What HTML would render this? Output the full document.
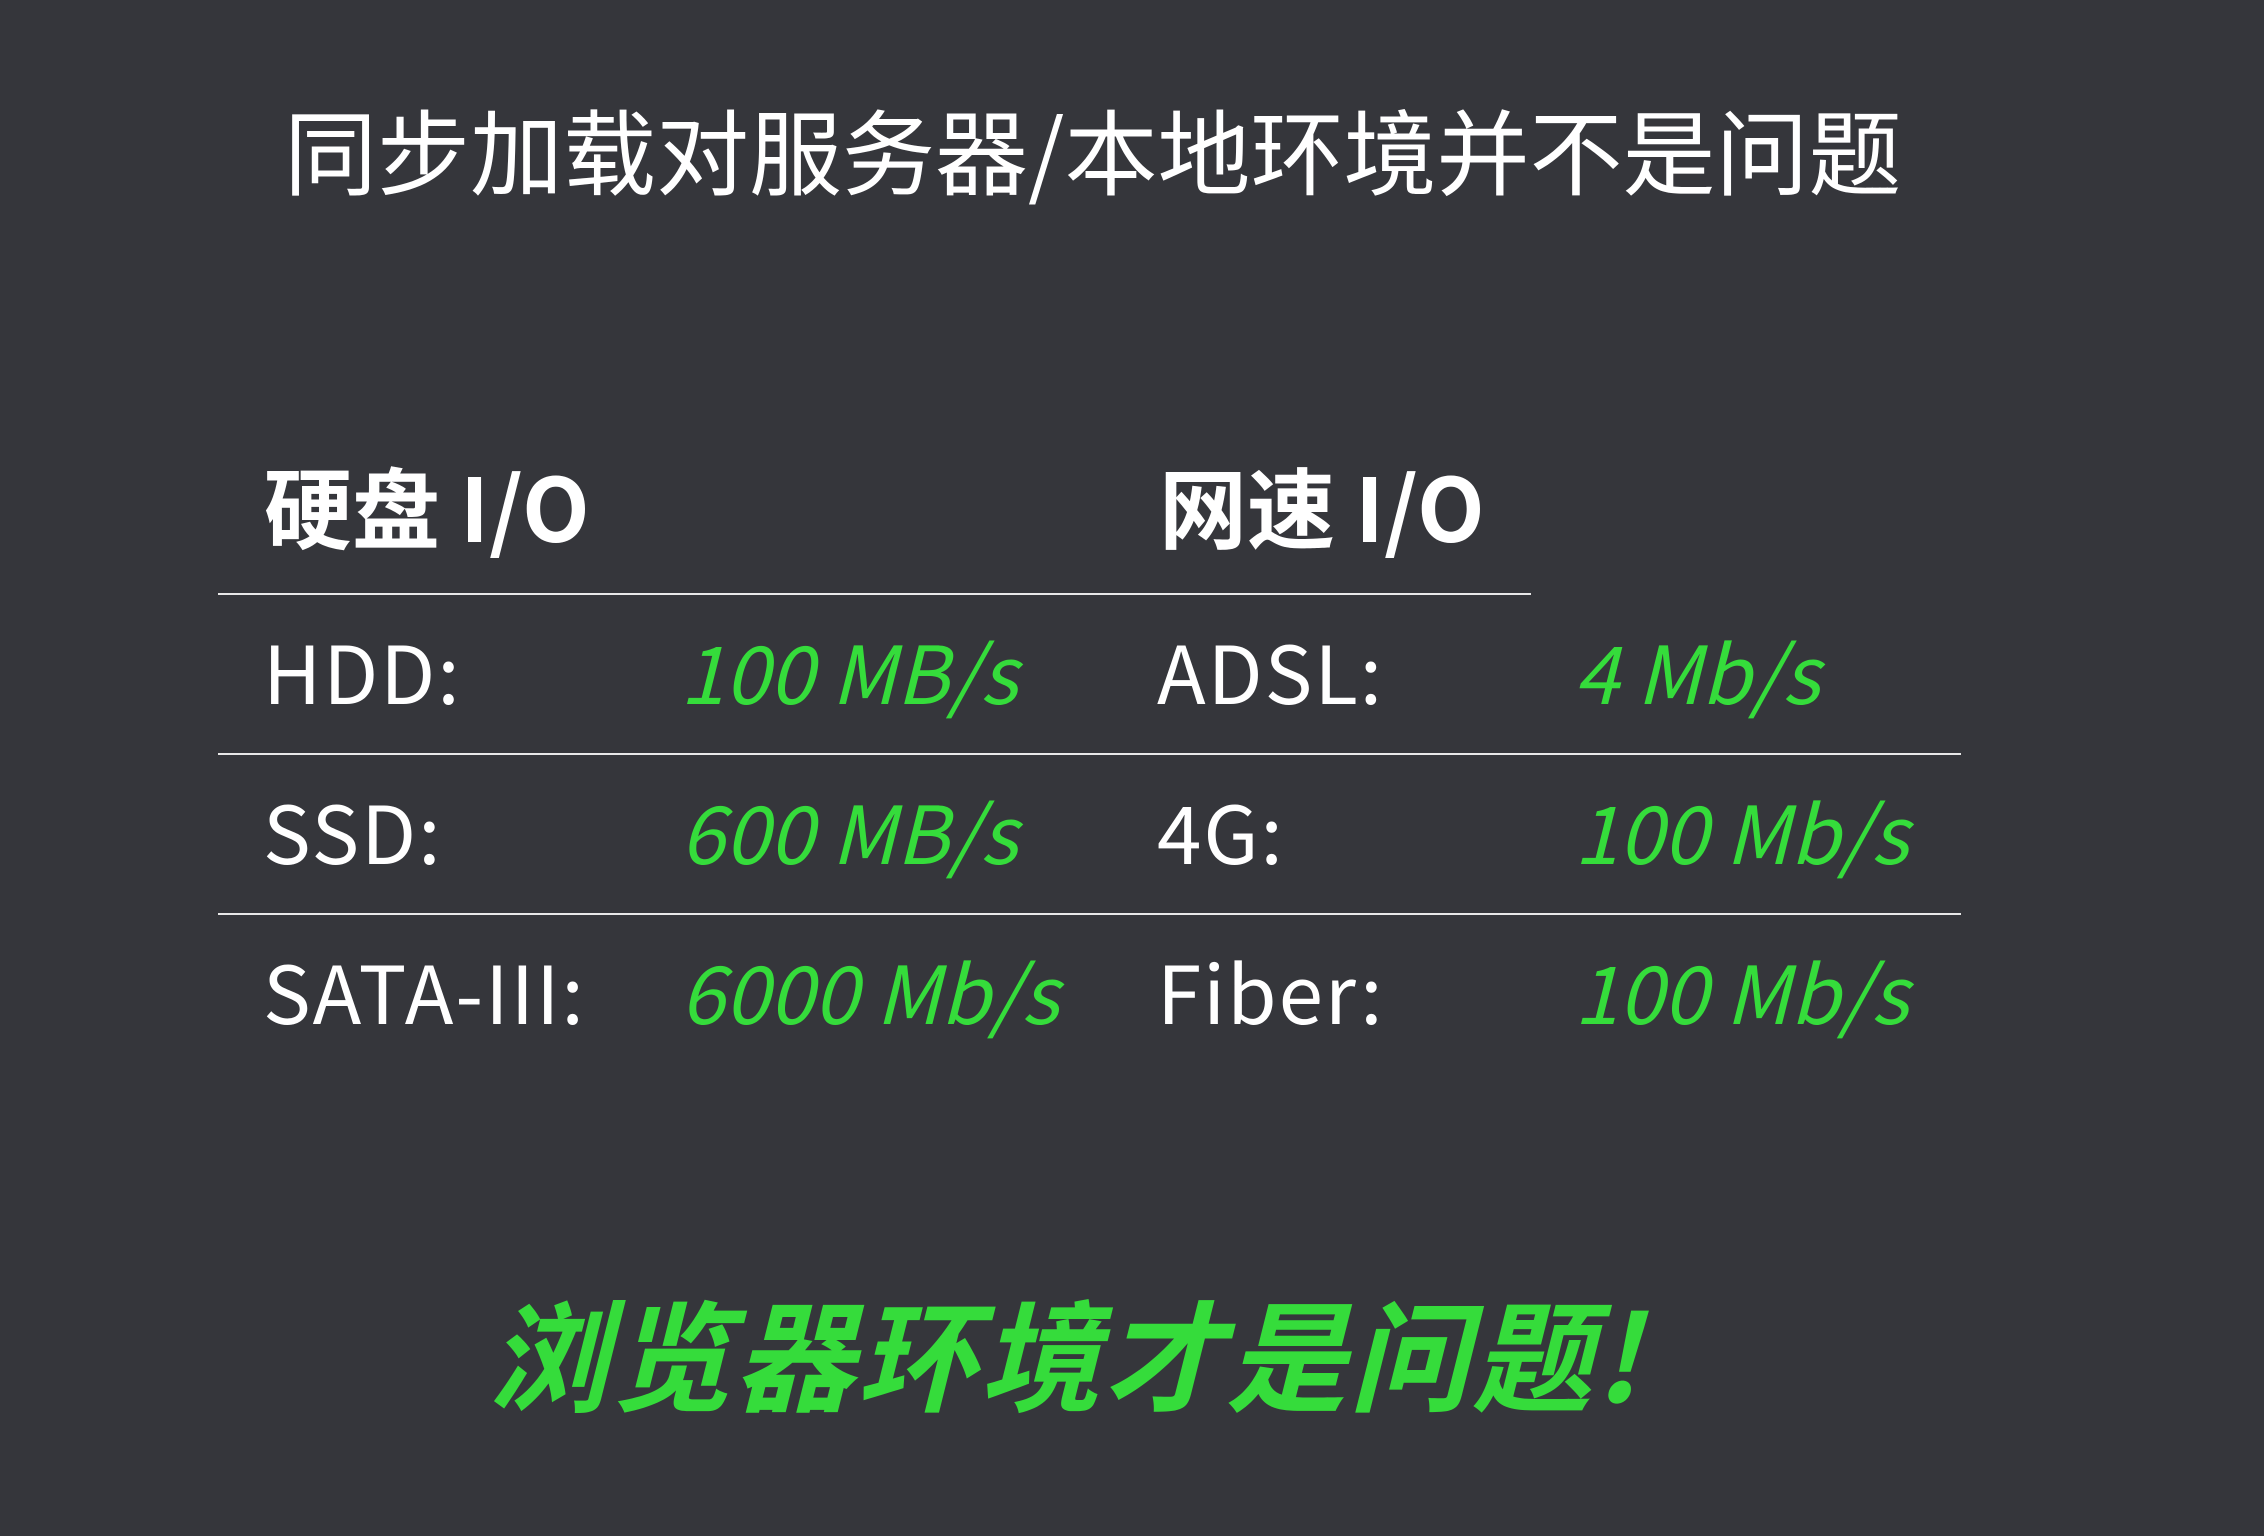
<!DOCTYPE html>
<html><head><meta charset="utf-8"><style>
html,body{margin:0;padding:0;}
body{width:2264px;height:1536px;background:#35363b;position:relative;overflow:hidden;font-family:"Noto Sans CJK SC","Liberation Sans",sans-serif;color:#fff;}
.t{position:absolute;white-space:nowrap;}
.g{color:#35dc3b;font-style:italic;}
.w{letter-spacing:2px;}
.l{position:absolute;height:2px;background:#e8e8e8;}
.r{font-size:80px;line-height:80px;}
</style></head><body>
<div class="t" style="left:284px;top:101px;font-size:93px;line-height:93px;">同步加载对服务器/本地环境并不是问题</div>
<div class="t" style="left:264px;top:461px;font-size:88px;line-height:88px;font-weight:bold;">硬盘 I/O</div>
<div class="t" style="left:1159px;top:461px;font-size:88px;line-height:88px;font-weight:bold;">网速 I/O</div>
<div class="l" style="left:218px;top:593px;width:1313px;"></div>
<div class="l" style="left:218px;top:753px;width:1743px;"></div>
<div class="l" style="left:218px;top:913px;width:1743px;"></div>

<div class="t r w" style="left:263px;top:630px;">HDD:</div>
<div class="t r g" style="left:680px;top:630px;">100 MB/s</div>
<div class="t r w" style="left:1157px;top:630px;">ADSL:</div>
<div class="t r g" style="left:1574px;top:630px;">4 Mb/s</div>

<div class="t r w" style="left:263px;top:790px;">SSD:</div>
<div class="t r g" style="left:680px;top:790px;">600 MB/s</div>
<div class="t r w" style="left:1157px;top:790px;">4G:</div>
<div class="t r g" style="left:1574px;top:790px;">100 Mb/s</div>

<div class="t r w" style="left:263px;top:950px;">SATA-III:</div>
<div class="t r g" style="left:680px;top:950px;">6000 Mb/s</div>
<div class="t r w" style="left:1157px;top:950px;">Fiber:</div>
<div class="t r g" style="left:1574px;top:950px;">100 Mb/s</div>

<div class="t g" style="left:488px;top:1290px;font-size:120px;line-height:120px;font-weight:bold;letter-spacing:3px;">浏览器环境才是问题!</div>
</body></html>
